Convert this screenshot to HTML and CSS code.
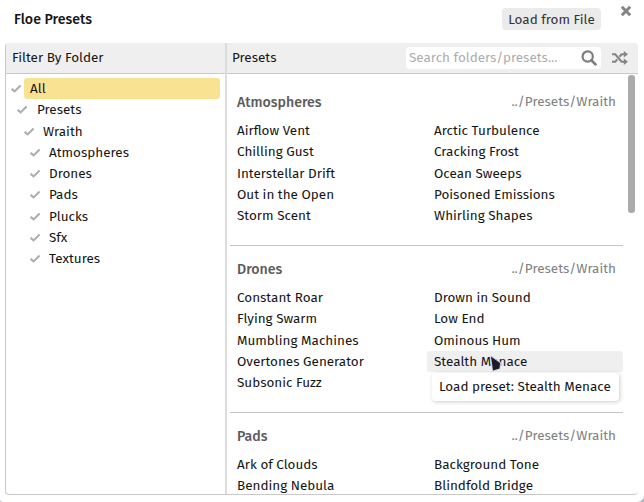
FILE: index.html
```html
<!DOCTYPE html>
<html lang="en">
<head>
<meta charset="utf-8">
<title>Floe Presets</title>
<link rel="stylesheet" href="styles.css">
</head>
<body>
<svg class="defs"><symbol id="check" viewBox="0 0 11 9"><path d="M.6 4.8 3.6 7.4 9.6 1.6" fill="none" stroke="#adadad" stroke-width="2.1"/></symbol></svg>
<div class="window">
  <header class="titlebar">
    <h1>Floe Presets</h1>
    <button class="load">Load from File</button>
    <svg class="close" viewBox="0 0 12 12"><path d="M1.8 1.8 10.2 10.2M10.2 1.8 1.8 10.2" stroke="#858585" stroke-width="3"/></svg>
  </header>
  <main class="panel">
    <section class="folders">
      <div class="bar"><span class="cap">Filter By Folder</span></div>
      <ul class="tree">
        <li class="on"><svg><use href="#check"/></svg><span>All</span></li>
        <li class="l1"><svg><use href="#check"/></svg><span>Presets</span></li>
        <li class="l2"><svg><use href="#check"/></svg><span>Wraith</span></li>
        <li class="l3"><svg><use href="#check"/></svg><span>Atmospheres</span></li>
        <li class="l3"><svg><use href="#check"/></svg><span>Drones</span></li>
        <li class="l3"><svg><use href="#check"/></svg><span>Pads</span></li>
        <li class="l3"><svg><use href="#check"/></svg><span>Plucks</span></li>
        <li class="l3"><svg><use href="#check"/></svg><span>Sfx</span></li>
        <li class="l3"><svg><use href="#check"/></svg><span>Textures</span></li>
      </ul>
    </section>
    <section class="presets">
      <div class="bar">
        <span class="cap">Presets</span>
        <div class="search"><span>Search folders/presets...</span>
          <svg viewBox="0 0 16 16"><circle cx="6.7" cy="6.5" r="5.1" fill="none" stroke="#7e7e7e" stroke-width="2.2"/><path d="M10.3 10.2 14.5 14.4" stroke="#7e7e7e" stroke-width="2.7" stroke-linecap="round"/></svg>
        </div>
        <svg class="shuffle" viewBox="0 0 16 14"><g fill="none" stroke="#858585" stroke-width="2.1"><path d="M0 3.2H3.2L9.6 10.8H13M0 10.8H3.2L5.3 8.4M7.4 5.7 9.6 3.2H13"/></g><path d="M11.8 0 16 3.2 11.8 6.4ZM11.8 7.6 16 10.8 11.8 14Z" fill="#858585"/></svg>
      </div>
      <div class="scroll">
        <div class="list">
          <section class="group">
            <div class="head"><h2>Atmospheres</h2><span>../Presets/Wraith</span></div>
            <ul>
              <li>Airflow Vent</li><li>Arctic Turbulence</li>
              <li>Chilling Gust</li><li>Cracking Frost</li>
              <li>Interstellar Drift</li><li>Ocean Sweeps</li>
              <li>Out in the Open</li><li>Poisoned Emissions</li>
              <li>Storm Scent</li><li>Whirling Shapes</li>
            </ul>
          </section>
          <section class="group">
            <div class="head"><h2>Drones</h2><span>../Presets/Wraith</span></div>
            <ul>
              <li>Constant Roar</li><li>Drown in Sound</li>
              <li>Flying Swarm</li><li>Low End</li>
              <li>Mumbling Machines</li><li>Ominous Hum</li>
              <li>Overtones Generator</li>
              <li class="hover">Stealth Menace
                <div class="tip">Load preset: Stealth Menace</div>
                <svg class="cursor" viewBox="0 0 14 19"><path d="M3 2.5 12 9 11.5 14.5 5 16.5Z" fill="#1b1a29" stroke="#d5d4e2" stroke-width="2" paint-order="stroke" stroke-linejoin="round"/></svg>
              </li>
              <li>Subsonic Fuzz</li>
            </ul>
          </section>
          <section class="group">
            <div class="head"><h2>Pads</h2><span>../Presets/Wraith</span></div>
            <ul>
              <li>Ark of Clouds</li><li>Background Tone</li>
              <li>Bending Nebula</li><li>Blindfold Bridge</li>
            </ul>
          </section>
        </div>
        <div class="thumb"></div>
      </div>
    </section>
  </main>
</div>
</body>
</html>
```
FILE: styles.css
```css
* { box-sizing: border-box; }
body { margin: 0; background: #b9b8c8; font-family: "Fira Sans", "Noto Sans", sans-serif; font-size: 13.47px; color: #151515; }
h1, h2, ul { margin: 0; padding: 0; }
ul { list-style: none; }
.defs { position: absolute; width: 0; height: 0; }
.window { width: 644px; height: 502px; overflow: hidden; display: flex; flex-direction: column; padding: 0 6px 7px 5px; background: #fff; border-radius: 0 0 7px 3px; }
.titlebar { height: 43px; flex: none; display: flex; align-items: flex-start; padding-left: 9px; }
h1 { font-size: 14.15px; font-weight: 500; line-height: 20px; padding-top: 10px; flex: 1; }
.load { font: inherit; color: #333; border: 0; border-radius: 4px; background: #ebebeb; width: 99px; height: 22px; padding: 1px 0 0; margin: 8px 19px 0 0; line-height: 21px; }
.close { width: 12px; height: 12px; margin: 5px 6px 0 0; }
.panel { flex: 1; min-height: 0; display: flex; border: solid #c9c9c9; border-width: 0 0 1px 1px; border-radius: 4px; overflow: hidden; }
.folders { width: 221px; flex: none; border-right: 2px solid #dcdcdc; }
.presets { flex: 1; min-width: 0; display: flex; flex-direction: column; }
.bar { height: 31px; flex: none; background: #efefef; border-bottom: 1px solid #c9c9c9; display: flex; align-items: center; padding-left: 6px; }
.presets .bar { padding-left: 5px; }
.cap { flex: 1; padding-bottom: 1px; }
.search { width: 195px; height: 22px; border-radius: 4px; background: #fff; color: #adadad; display: flex; align-items: center; justify-content: space-between; padding: 0 4px 0 3px; white-space: nowrap; }
.search span { padding-bottom: 1px; }
.search svg { width: 16px; height: 16px; }
.shuffle { width: 16px; height: 14px; margin: 0 10px 0 11px; }
.tree { padding: 4px 5px 0 5px; }
.tree li { height: 21.25px; display: flex; align-items: center; }
.tree svg { width: 11px; height: 9px; flex: none; margin-right: 2px; }
.tree span { flex: 1; line-height: 21px; padding-left: 6px; border-radius: 3px; }
.tree .on span { background: #fae293; }
.tree .l1 { padding-left: 6px; }
.tree .l1 span { padding-left: 7px; }
.tree .l2 { padding-left: 13px; }
.tree .l3 { padding-left: 19px; }
.scroll { flex: 1; min-height: 0; overflow: hidden; display: flex; padding: 5px 3px 0 3px; }
.list { width: 393px; }
.group { height: 167px; padding-top: 9px; border-bottom: 1px solid #c4c4c4; }
.head { height: 28px; margin-bottom: 4px; padding: 0 7px; display: flex; align-items: center; justify-content: space-between; color: #808080; }
.head span { padding-bottom: 1px; }
h2 { font-size: 14.15px; font-weight: 500; color: #5c5c5c; }
.group ul { display: grid; grid-template-columns: 197px 196px; grid-auto-rows: 21.3px; }
.group li { line-height: 21px; padding-left: 7px; white-space: nowrap; border-radius: 3px; }
.group .hover { background: #efefef; position: relative; }
.tip { position: absolute; left: 5px; top: 22px; width: 187px; height: 28px; line-height: 28px; padding-left: 7px; background: #fff; border-radius: 4px; box-shadow: 1px 1px 4px rgba(0,0,0,.2); }
.cursor { position: absolute; left: 61px; top: 3px; width: 14px; height: 19px; }
.thumb { width: 7px; height: 138px; margin: -4px 0 0 5px; border-radius: 3px; background: #ababab; flex: none; }
```
